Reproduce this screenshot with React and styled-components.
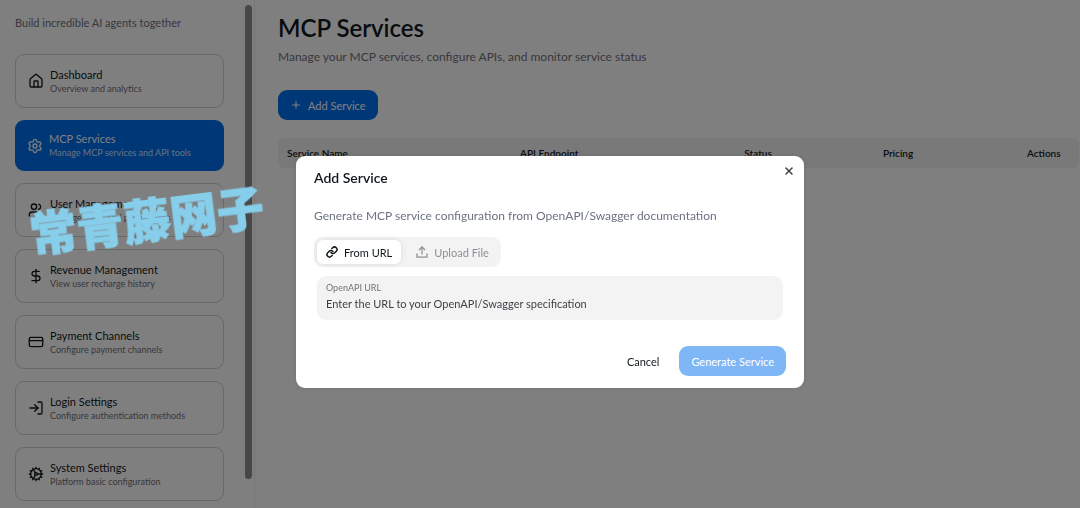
import React, { useState } from "react";
import styled, { createGlobalStyle } from "styled-components";
import {
  Cog,
  CreditCard,
  DollarSign,
  House,
  Link,
  LogIn,
  Plus,
  Settings,
  Upload,
  Users,
  X,
} from "lucide-react";

const ColorSet = {
  primary: "#006fee",
  dark: "#11181c",
  medium: "#71717a",
  light: "#f3f3f4",
  border: "#d0d0d3",
  white: "#ffffff",
};

const menuItems = [
  { title: "Dashboard", text: "Overview and analytics", Icon: House },
  {
    title: "MCP Services",
    text: "Manage MCP services and API tools",
    Icon: Settings,
    active: true,
  },
  { title: "User Management", text: "Manage users and permissions", Icon: Users },
  { title: "Revenue Management", text: "View user recharge history", Icon: DollarSign },
  { title: "Payment Channels", text: "Configure payment channels", Icon: CreditCard },
  { title: "Login Settings", text: "Configure authentication methods", Icon: LogIn },
  { title: "System Settings", text: "Platform basic configuration", Icon: Cog },
];

const columns = [
  { name: "Service Name", width: "29.1%" },
  { name: "API Endpoint", width: "28%" },
  { name: "Status", width: "17.3%" },
  { name: "Pricing", width: "18%" },
  { name: "Actions", width: "7.6%" },
];

const AddServiceDialog = () => {
  const [tab, setTab] = useState("url");
  const [url, setUrl] = useState("");

  return (
    <Dialog role="dialog" aria-modal="true" aria-labelledby="dialog-title">
      <DialogHeader>
        <DialogTitle id="dialog-title">Add Service</DialogTitle>
        <CloseButton type="button" aria-label="Close">
          <X size={12} strokeWidth={3} />
        </CloseButton>
      </DialogHeader>
      <DialogText>
        Generate MCP service configuration from OpenAPI/Swagger documentation
      </DialogText>
      <Tabs role="tablist">
        <Tab
          type="button"
          role="tab"
          aria-selected={tab === "url"}
          $active={tab === "url"}
          onClick={() => setTab("url")}
        >
          <Link size={12} strokeWidth={3} />
          From URL
        </Tab>
        <Tab
          type="button"
          role="tab"
          aria-selected={tab === "file"}
          $active={tab === "file"}
          onClick={() => setTab("file")}
        >
          <UploadIcon />
          Upload File
        </Tab>
      </Tabs>
      <Field>
        <Label htmlFor="openapi-url">OpenAPI URL</Label>
        <Input
          id="openapi-url"
          type="url"
          placeholder="Enter the URL to your OpenAPI/Swagger specification"
          value={url}
          onChange={(event) => setUrl(event.target.value)}
        />
      </Field>
      <DialogFooter>
        <Button type="button" $plain>
          Cancel
        </Button>
        <Button type="button" disabled={!url}>
          Generate Service
        </Button>
      </DialogFooter>
    </Dialog>
  );
};

// square-cornered tray, unlike the rounded one in lucide
const UploadIcon = () => (
  <svg
    width="12"
    height="12"
    viewBox="0 0 24 24"
    fill="none"
    stroke="currentColor"
    strokeWidth="2.5"
    aria-hidden="true"
  >
    <path d="M2 15v7h20v-7" />
    <path d="M12 17V3" />
    <path d="M6 8l6-6 6 6" />
  </svg>
);

export default function App() {
  return (
    <>
      <GlobalStyle />
      <Wrapper>
        <Sidebar>
          <SidebarContent>
            <Tagline>Build incredible AI agents together</Tagline>
            <Menu>
              {menuItems.map(({ title, text, Icon, active }) => (
                <MenuLink
                  key={title}
                  href="#"
                  $active={active}
                  aria-current={active ? "page" : undefined}
                >
                  <Icon size={16} />
                  <div>
                    <MenuTitle>{title}</MenuTitle>
                    <MenuText $active={active}>{text}</MenuText>
                  </div>
                </MenuLink>
              ))}
            </Menu>
          </SidebarContent>
          <ScrollThumb />
        </Sidebar>
        <Main>
          <PageTitle>MCP Services</PageTitle>
          <PageText>
            Manage your MCP services, configure APIs, and monitor service status
          </PageText>
          <Button type="button">
            <Plus size={12} />
            Add Service
          </Button>
          <Table>
            <thead>
              <tr>
                {columns.map(({ name, width }) => (
                  <HeadCell key={name} $width={width} scope="col">
                    {name}
                  </HeadCell>
                ))}
              </tr>
            </thead>
          </Table>
        </Main>
      </Wrapper>
      <Backdrop>
        <AddServiceDialog />
      </Backdrop>
      <Watermark>常青藤网子</Watermark>
    </>
  );
}

const GlobalStyle = createGlobalStyle`
  * {
    box-sizing: border-box;
  }
  body {
    margin: 0;
    background-color: ${ColorSet.white};
    color: ${ColorSet.dark};
    font-family: Lato, "Liberation Sans", sans-serif;
    font-size: 11px;
  }
  button, input {
    font: inherit;
  }
  svg {
    flex-shrink: 0;
  }
`;

const Wrapper = styled.div`
  display: flex;
  min-height: 100vh;
`;

const Sidebar = styled.aside`
  display: flex;
  flex-shrink: 0;
  width: 255px;
  padding-right: 2px;
  border-right: 1px solid #f0f0f0;
`;

const SidebarContent = styled.div`
  flex: 1;
  padding: 15px 21px 8px 15px;
`;

const ScrollThumb = styled.div`
  width: 7px;
  margin: 5px 0 30px;
  border-radius: 4px;
  background-color: #8f8f8f;
`;

const Tagline = styled.p`
  margin: 0 0 24px;
  line-height: 15px;
  color: ${ColorSet.medium};
`;

const Menu = styled.nav`
  display: flex;
  flex-direction: column;
  gap: 12px;
`;

const MenuLink = styled.a`
  display: flex;
  align-items: center;
  gap: 6px;
  min-height: ${({ $active }) => ($active ? "51px" : "54px")};
  padding: 0 12px;
  border: ${({ $active }) => ($active ? "none" : `1px solid ${ColorSet.border}`)};
  border-radius: 9px;
  background-color: ${({ $active }) => ($active ? ColorSet.primary : "transparent")};
  color: ${({ $active }) => ($active ? ColorSet.white : ColorSet.dark)};
  text-decoration: none;
`;

const MenuTitle = styled.div`
  line-height: 14px;
`;

const MenuText = styled.div`
  font-size: 9px;
  line-height: 13px;
  color: ${({ $active }) => ($active ? "#cce3fd" : ColorSet.medium)};
`;

const Main = styled.main`
  flex: 1;
  min-width: 0;
  padding: 14px 1px 15px 23px;
`;

const PageTitle = styled.h1`
  margin: 0;
  font-size: 24px;
  font-weight: 600;
  line-height: 28px;
`;

const PageText = styled.p`
  margin: 6px 0 24px;
  font-size: 12px;
  line-height: 18px;
  color: ${ColorSet.medium};
`;

const Button = styled.button`
  display: flex;
  align-items: center;
  gap: 6px;
  height: 30px;
  padding: 0 12px;
  border: none;
  border-radius: 9px;
  background-color: ${({ $plain }) => ($plain ? "transparent" : ColorSet.primary)};
  color: ${({ $plain }) => ($plain ? ColorSet.dark : ColorSet.white)};
  cursor: pointer;
  &:disabled {
    opacity: 0.5;
    cursor: default;
  }
`;

const Table = styled.table`
  width: 100%;
  margin-top: 18px;
  border-spacing: 0;
  table-layout: fixed;
`;

const HeadCell = styled.th`
  width: ${({ $width }) => $width};
  height: 30px;
  padding: 0 9px;
  background-color: ${ColorSet.light};
  font-size: 10px;
  font-weight: 600;
  text-align: left;
  &:first-child {
    border-radius: 6px 0 0 6px;
  }
  &:last-child {
    border-radius: 0 6px 6px 0;
  }
`;

const Backdrop = styled.div`
  position: fixed;
  inset: 0;
  display: flex;
  align-items: center;
  justify-content: center;
  padding: 36px 0 0 20px;
  background-color: rgba(0, 0, 0, 0.5);
`;

const Dialog = styled.div`
  width: 508px;
  max-width: 100%;
  padding: 12px 18px;
  border-radius: 9px;
  background-color: ${ColorSet.white};
  box-shadow: 0 0 6px rgba(0, 0, 0, 0.1);
`;

const DialogHeader = styled.div`
  display: flex;
  justify-content: space-between;
`;

const DialogTitle = styled.h2`
  margin: 0;
  font-size: 14px;
  font-weight: 600;
  line-height: 20px;
`;

const CloseButton = styled.button`
  display: flex;
  align-items: center;
  justify-content: center;
  width: 18px;
  height: 18px;
  margin: -6px -12px 0 0;
  padding: 0;
  border: none;
  background: none;
  color: #3f3f46;
  cursor: pointer;
`;

const DialogText = styled.p`
  margin: 19px 0 12px;
  font-size: 12px;
  line-height: 18px;
  color: #6b7280;
`;

const Tabs = styled.div`
  display: inline-flex;
  gap: 6px;
  padding: 3px;
  border-radius: 9px;
  background-color: ${ColorSet.light};
`;

const Tab = styled.button`
  display: flex;
  align-items: center;
  gap: 6px;
  height: 24px;
  padding: 0 9px;
  border: none;
  border-radius: 6px;
  background-color: ${({ $active }) => ($active ? ColorSet.white : "transparent")};
  box-shadow: ${({ $active }) => ($active ? "0 0 6px rgba(0, 0, 0, 0.1)" : "none")};
  color: ${({ $active }) => ($active ? ColorSet.dark : "#8e8e95")};
  cursor: pointer;
`;

const Field = styled.div`
  display: flex;
  flex-direction: column;
  margin: 9px 3px 26px;
  padding: 5px 9px 9px;
  border-radius: 9px;
  background-color: ${ColorSet.light};
`;

const Label = styled.label`
  font-size: 9px;
  line-height: 14px;
  color: ${ColorSet.medium};
`;

const Input = styled.input`
  height: 16px;
  padding: 0;
  border: none;
  outline: none;
  background: none;
  color: ${ColorSet.dark};
  &::placeholder {
    color: #3f3f46;
  }
`;

const DialogFooter = styled.div`
  display: flex;
  justify-content: flex-end;
  gap: 8px;
`;

const Watermark = styled.div`
  position: fixed;
  top: 194px;
  left: 29px;
  font-family: "Noto Sans CJK SC", sans-serif;
  font-size: 47px;
  font-weight: 900;
  line-height: 48px;
  color: #87ceeb;
  white-space: nowrap;
  -webkit-text-stroke: 1px #87ceeb;
  transform: rotate(-7deg);
  pointer-events: none;
`;
